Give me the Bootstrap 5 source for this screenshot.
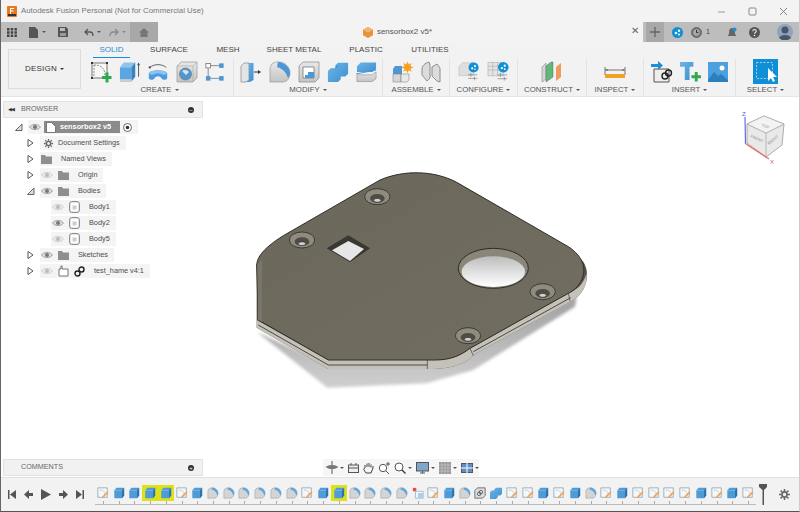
<!DOCTYPE html>
<html lang="en">
<head>
    <meta charset="UTF-8">
    <meta name="viewport" content="width=device-width, initial-scale=1.0">
    <title>Autodesk Fusion Personal</title>
    <link href="https://cdn.jsdelivr.net/npm/bootstrap@5.3.0/dist/css/bootstrap.min.css" rel="stylesheet">
    <style>
        html, body { margin: 0; width: 800px; height: 512px; overflow: hidden; background: #fff; }
        body { font-family: "Liberation Sans", Arial, sans-serif; font-size: 8px; color: #555; }
        svg { display: block; flex: none; }
        .app-window { width: 800px; height: 512px; border-left: 1px solid #666; border-bottom: 1px solid #555; border-right: 1px solid #ccc; }

        /* title bar */
        .title-bar { height: 22px; background: #f3f3f3; padding-left: 6px; font-size: 7.85px; color: #777; flex: none; }
        .win-ctrl { width: 31px; }

        /* tab strip */
        .tab-strip { height: 20px; background: #bdbdbd; flex: none; padding-left: 6px; }
        .caret-mini { width: 0; height: 0; border-left: 2px solid transparent; border-right: 2px solid transparent; border-top: 2.5px solid #555; margin-left: 3px; }
        .caret-mini.is-off { border-top-color: #888; }
        .home-btn { width: 28px; height: 20px; background: #a8a8a8; }
        .doc-tab { width: 485px; height: 20px; background: #f3f3f3; font-size: 8px; color: #555; position: relative; }
        .doc-close { position: absolute; right: 4px; top: 4px; font-size: 10px; line-height: 1; color: #666; }
        .plus-btn { width: 18px; height: 20px; background: #a8a8a8; margin: 0 4px 0 3px; }

        /* ribbon */
        .ribbon { height: 55px; background: #f2f2f2; border-bottom: 1px solid #e4e4e4; flex: none; padding-left: 7px; }
        .design-box { width: 73px; height: 40px; margin-top: 7px; background: #f1f1f1; border: 1px solid #dcdcdc; font-size: 8px; color: #333; letter-spacing: .2px; }
        .dropdown-toggle::after { margin-left: 3px; vertical-align: 1px; border-top-width: 2.5px; border-left-width: 2px; border-right-width: 2px; }
        .ribbon-side { padding-left: 5px; }
        .tab-row { height: 16px; padding-left: 7px; }
        .rib-tab { text-align: center; font-size: 8px; line-height: 15px; color: #444; }
        .rib-tab.is-active { color: #1b8dd6; border-bottom: 1.5px solid #1b8dd6; height: 16px; }
        .rib-group { height: 37px; border-right: 1px solid #e2e2e2; margin-top: 1px; }
        .rib-tools { height: 25px; gap: 7px; }
        .rib-label { font-size: 7.8px; line-height: 11px; color: #555; }

        /* canvas and floating panels */
        .work-area { position: relative; background: #fff; }
        .side-panel { position: absolute; left: 2px; width: 200px; height: 17px; background: #f1f1f1; border: 1px solid #e2e2e2; padding: 0 8px 0 4px; font-size: 7.2px; color: #666; }
        .browser-head { top: 4px; }
        .comments-head { bottom: 1px; padding-left: 17px; }
        .panel-dot { width: 6px; height: 6px; border-radius: 50%; background: #333; color: #fff; font-size: 6px; line-height: 6px; text-align: center; }
        .tree-list { position: absolute; top: 22px; left: 0; }
        .tree-row { height: 16px; }
        .tree-tri { width: 13px; }
        .lvl-0 { padding-left: 14px; }
        .lvl-1 { padding-left: 26px; }
        .lvl-2 { padding-left: 50px; }
        .tree-pill { height: 14px; background: #f4f4f4; padding: 0 6px 0 1px; gap: 5px; font-size: 7.3px; color: #4c4c4c; white-space: nowrap; }
        .tree-name { background: #8b8b8b; color: #fff; height: 12px; line-height: 12px; padding: 0 9px 0 2px; font-weight: 700; }
        .is-faded { opacity: .45; }
        .model-view { position: absolute; left: 239px; top: 68px; }
        .view-cube { position: absolute; left: 729px; top: 0; }
        .nav-bar { position: absolute; left: 322px; bottom: 1px; height: 17px; width: 156px; background: #f6f6f6; gap: 2px; padding: 0 3px; }
        .nav-gap { margin-left: 2px; }

        /* timeline */
        .time-line { height: 34px; background: #f2f2f2; border-top: 1px solid #e0e0e0; flex: none; padding-left: 7px; position: relative; }
        .play-btns { width: 87px; gap: 8px; }
        .time-track { border-bottom: 1px solid #bbb; height: 20px; margin-top: 7px; width: 661px; }
        .time-item { width: 15.93px; height: 16px; position: relative; }
        .time-item.is-hit { background: #dde11a; }
        .time-item svg { width: 12px; height: 12px; }
        .time-item::after { content: ""; position: absolute; left: 50%; top: 16px; width: 1px; height: 3px; background: #aaa; }
        .play-head { position: absolute; left: 758px; top: 6px; }
        .time-gear { position: absolute; right: 9px; top: 11px; }
    </style>
</head>
<body>
    <!-- shared icons -->
    <svg width="0" height="0" style="position:absolute">
        <defs>
            <linearGradient id="blueFace" x1="0" y1="0" x2="1" y2="1"><stop offset="0" stop-color="#6db5e8"/><stop offset="1" stop-color="#3d8fd0"/></linearGradient>
            <linearGradient id="grayFace" x1="0" y1="0" x2="0" y2="1"><stop offset="0" stop-color="#e8e8e8"/><stop offset="1" stop-color="#c4c4c4"/></linearGradient>
            <linearGradient id="plateFace" x1="0" y1="0" x2="1" y2="1"><stop offset="0" stop-color="#6c675b"/><stop offset="1" stop-color="#726d61"/></linearGradient>
            <linearGradient id="holeFill" x1="0" y1="0" x2="0" y2="1"><stop offset="0" stop-color="#bdbdbd"/><stop offset=".6" stop-color="#e6e6e6"/><stop offset="1" stop-color="#fff"/></linearGradient>
            <linearGradient id="shadowFade" x1="0" y1="0" x2="0" y2="1"><stop offset="0" stop-color="#a0a0a0"/><stop offset="1" stop-color="#cfcfcf"/></linearGradient>
            <filter id="softShadow" x="-10%" y="-20%" width="120%" height="140%"><feGaussianBlur stdDeviation="5"/></filter>
        </defs>
        <symbol id="i-sketch" viewBox="0 0 22 22"><path d="M2 2h15v15H2z" fill="#f7f7f7" stroke="#555" stroke-width=".8"/><path d="M4 4v11M4 4c8 0 11 4 11 11" fill="none" stroke="#777" stroke-width=".8" stroke-dasharray="2 1"/><path d="M1 1h2v2H1zM16 1h2v2h-2zM1 16h2v2H1z" fill="#333"/><path d="M12 15h3.500v-3.500h3v3.500h3v3h-3v3.500h-3v-3.500h-3.500z" fill="#2fa84f"/></symbol>
        <symbol id="i-extrude" viewBox="0 0 22 22"><path d="M1 6h12v15H1z" fill="#5aa6e2"/><path d="M1 6l4-5h12l-4 5z" fill="#8cc4ee"/><path d="M13 6l4-5v15l-4 5z" fill="#3a83bd"/><path d="M1 18.500h12V21H1z" fill="#cfcfcf"/><path d="M20.500 2v14" stroke="#444" stroke-width=".9"/><path d="M19 4l1.500-3L22 4z" fill="#444"/></symbol>
        <symbol id="i-revolve" viewBox="0 0 24 22"><path d="M2 12c3-4 17-4 20 0v6c-1 2-5 2-6 0-2-3-6-3-8 0-1 2-5 2-6 0z" fill="#4d9ade"/><path d="M2 12c3-4 17-4 20 0-2 3-5 2-7 1-2-1-4-1-6 0-2 1-5 2-7-1z" fill="#8cc4ee"/><path d="M3 6c5-4 13-4 18 0" fill="none" stroke="#444" stroke-width=".9"/><circle cx="3" cy="6" r="1.200" fill="#444"/></symbol>
        <symbol id="i-hole" viewBox="0 0 22 22"><path d="M1 5l4-4h16v16l-4 4H1z" fill="url(#grayFace)" stroke="#999" stroke-width=".7"/><path d="M1 5h16v16M17 5l4-4" fill="none" stroke="#aaa" stroke-width=".6"/><circle cx="9.500" cy="13" r="6" fill="#4d97d6" stroke="#777" stroke-width=".7"/><path d="M6 10a5 5 0 0 1 7 1l-3 3z" fill="#e2e2e2"/></symbol>
        <symbol id="i-box" viewBox="0 0 22 22"><path d="M6 4h10M3.500 7v9M6 18h10" fill="none" stroke="#666" stroke-width=".8"/><rect x="1" y="1.500" width="5" height="5" fill="#fff" stroke="#666" stroke-width=".8"/><rect x="15.500" y="1.500" width="5" height="5" fill="#4d97d6"/><rect x="1" y="15.500" width="5" height="5" fill="#4d97d6"/><rect x="15.500" y="15.500" width="5" height="5" fill="#4d97d6"/></symbol>
        <symbol id="i-press" viewBox="0 0 22 22"><path d="M1 5l3-3h5v17l-3 2H1z" fill="#e4e4e4" stroke="#888" stroke-width=".7"/><path d="M9 2h4.500v17L10 21H6l3-2z" fill="url(#blueFace)"/><path d="M14 11h5" stroke="#333"/><path d="M18 9l3 2-3 2z" fill="#333"/></symbol>
        <symbol id="i-fillet" viewBox="0 0 22 22"><path d="M1 21V8c0-4 3-7 7-7h2c6 0 11 5 11 11 0 5-3 9-7 9z" fill="url(#grayFace)" stroke="#999" stroke-width=".7"/><path d="M9 1c6 0 12 5 12 11 0 2-1 4-2 5-2-6-5-9-11-11z" fill="#4d97d6"/></symbol>
        <symbol id="i-shell" viewBox="0 0 22 22"><path d="M1 5l4-4h16v16l-4 4H1z" fill="url(#grayFace)" stroke="#888" stroke-width=".7"/><path d="M5 6h11v11H5z" fill="#fff" stroke="#666" stroke-width=".7"/><path d="M10 11h6v6H7v-3h3z" fill="#4d97d6"/></symbol>
        <symbol id="i-combine" viewBox="0 0 24 22"><path d="M9 4l3-3h11v12l-3 3h-5v3l-3 3H1V10l3-3h5z" fill="url(#blueFace)"/><path d="M9 7l3-3" stroke="#2f7cb9" fill="none"/></symbol>
        <symbol id="i-split" viewBox="0 0 22 22"><path d="M1 5l4-4h16v7l-4 3H1z" fill="url(#blueFace)"/><path d="M1 14h16l4-3v7l-4 3H1z" fill="url(#grayFace)" stroke="#888" stroke-width=".6"/><path d="M0 13l21-4" stroke="#4d97d6" fill="none"/></symbol>
        <symbol id="i-newcomp" viewBox="0 0 22 22"><path d="M1 8l2-3h7v8H1z" fill="#4d97d6"/><path d="M1 13h8v8H1z" fill="#d6d6d6" stroke="#777" stroke-width=".5"/><path d="M9 13h8v6l-2 2H9z" fill="#e8e8e8" stroke="#777" stroke-width=".5"/><path d="M15.500.5l1.300 3 3-1.400-1.400 3 3 1.300-3 1.300 1.400 3-3-1.400-1.300 3-1.300-3-3 1.400 1.400-3-3-1.300 3-1.300-1.400-3 3 1.400z" fill="#f4a11f"/></symbol>
        <symbol id="i-joint" viewBox="0 0 20 22"><path d="M1 8c0-3 3-6 7-7l1 3v13l-3 3-5-6zM11 6l5-3 3 4v14l-3-1-5-5z" fill="#dcdcdc" stroke="#777" stroke-width=".8"/></symbol>
        <symbol id="i-conf" viewBox="0 0 24 22"><path d="M1 5l4-4h12v14H1z" fill="#dedede" stroke="#bbb" stroke-width=".6"/><path d="M11 14h10M11 18h10M14 12v4M18 16v4" stroke="#888" stroke-width=".8"/><circle cx="17" cy="6" r="5.500" fill="#0f8fd6"/><circle cx="15.500" cy="7" r="1.200" fill="#fff"/><circle cx="18.500" cy="4.500" r="1.200" fill="#fff"/><circle cx="18.500" cy="8" r=".9" fill="#fff"/></symbol>
        <symbol id="i-table" viewBox="0 0 24 22"><path d="M1 1h16v14H1z" fill="#e5e5e5" stroke="#aaa" stroke-width=".6"/><path d="M1 5h16M1 9h16M6 1v14M11 1v14" stroke="#aaa" stroke-width=".6"/><path d="M11 14h10M11 18h10M14 12v4M18 16v4" stroke="#888" stroke-width=".8"/><circle cx="17" cy="6" r="5.500" fill="#0f8fd6"/><circle cx="15.500" cy="7" r="1.200" fill="#fff"/><circle cx="18.500" cy="4.500" r="1.200" fill="#fff"/><circle cx="18.500" cy="8" r=".9" fill="#fff"/></symbol>
        <symbol id="i-plane" viewBox="0 0 22 22"><path d="M1 6l4-4v16l-4 3z" fill="#d5d5d5" stroke="#888" stroke-width=".6"/><path d="M5 5l5-4h2v15l-7 5z" fill="#5fb877" stroke="#555" stroke-width=".4"/><path d="M15 6l5-4v14l-5 4z" fill="#ef9a5c"/></symbol>
        <symbol id="i-measure" viewBox="0 0 22 22"><path d="M1 6v8M21 6v8M1 9h20" stroke="#555" fill="none" stroke-width=".8"/><path d="M3 8v2M19 8v2" stroke="#555"/><rect x="1" y="13" width="20" height="4" fill="#eea324"/></symbol>
        <symbol id="i-derive" viewBox="0 0 22 22"><path d="M3 8h15v13H3z" fill="#eee" stroke="#555"/><path d="M0 3h7V0l5 4.500L7 9V6H0z" fill="#1c8fd6"/><circle cx="14" cy="15" r="3" fill="none" stroke="#222" stroke-width="1.400"/><circle cx="17.500" cy="12" r="3" fill="none" stroke="#222" stroke-width="1.400"/></symbol>
        <symbol id="i-bolt" viewBox="0 0 22 22"><path d="M0 1h14v5H10v14H5V6H0z" fill="url(#blueFace)"/><path d="M12 15h3.500v-3.500h3V15H22v3h-3.500v3.500h-3V18H12z" fill="#2fa84f"/></symbol>
        <symbol id="i-image" viewBox="0 0 20 20"><rect width="20" height="20" fill="#4d9fde"/><circle cx="14" cy="6" r="2.500" fill="#fff"/><path d="M0 18l6-8 4 4 3-2 7 6v2H0z" fill="#2c7fbe"/></symbol>
        <symbol id="i-tsketch" viewBox="0 0 14 14"><path d="M1 1h11v11H1z" fill="#f5f8fb" stroke="#8a9db0" stroke-width=".9"/><path d="M3.500 3.500c4 0 6 2 6 6" fill="none" stroke="#999" stroke-width=".8" stroke-dasharray="1.500 1"/><path d="M6 11l6-6 1.500 1.500-6 6H6z" fill="#eea659"/></symbol>
        <symbol id="i-tbox" viewBox="0 0 14 14"><path d="M1.500 4l2.500-3h9v9l-2.500 3h-9z" fill="#4f9bd8"/><path d="M10.500 4L13 1v9l-2.500 3z" fill="#2d73aa"/><path d="M1.500 4h9" stroke="#8cc2ea" stroke-width=".7"/></symbol>
        <symbol id="i-tfillet" viewBox="0 0 14 14"><path d="M1 13V5c0-2 2-4 4-4h2c3 0 6 3 6 6 0 3-2 6-4 6z" fill="#d4d4d4" stroke="#999" stroke-width=".6"/><path d="M6 1c4 0 7 3 7 7l-1 2C11 6 9 4 5 3z" fill="#5da5df"/></symbol>
        <symbol id="i-tcut" viewBox="0 0 14 14"><rect x="1" y="1" width="4" height="4" fill="#e0504b"/><path d="M4 5h9v8H4z" fill="#f5f8fb" stroke="#7fa9cc" stroke-width=".8"/><path d="M7 7h6v6H7z" fill="#a9d0ee"/></symbol>
        <symbol id="i-tlink" viewBox="0 0 14 14"><path d="M1 4l3-3h9v9l-3 3H1z" fill="#ddd" stroke="#555" stroke-width=".9"/><circle cx="6" cy="8" r="2" fill="none" stroke="#444" stroke-width=".9"/><circle cx="8" cy="6" r="2" fill="none" stroke="#444" stroke-width=".9"/></symbol>
        <symbol id="i-tcomb" viewBox="0 0 14 14"><path d="M5 3l2-2h7v7l-2 2H9v2l-2 2H0V6l2-2h3z" fill="url(#blueFace)"/></symbol>
        <symbol id="i-eye" viewBox="0 0 12 8"><path d="M.5 4C3 .5 9 .5 11.500 4 9 7.500 3 7.500 .5 4z" fill="#dcdcdc" stroke="#888" stroke-width=".7"/><circle cx="6" cy="4" r="2" fill="#777"/></symbol>
        <symbol id="i-folder" viewBox="0 0 11 9"><path d="M0 0h4l1 1.500h6V9H0z" fill="#8f8f8f"/></symbol>
        <symbol id="i-gear" viewBox="0 0 16 16"><circle cx="8" cy="8" r="3.700" fill="none" stroke="#666" stroke-width="2.500"/><path d="M8 0v3M8 13v3M0 8h3M13 8h3M2.300 2.300l2.100 2.100M11.600 11.600l2.100 2.100M2.300 13.700l2.100-2.100M11.600 4.400l2.100-2.100" stroke="#666" stroke-width="2.300"/></symbol>
        <symbol id="i-body" viewBox="0 0 11 12"><rect x=".7" y=".7" width="9.600" height="10.600" rx="2" fill="#fff" stroke="#777"/><rect x="3.500" y="4.500" width="4" height="4" fill="#ccc"/></symbol>
        <symbol id="i-link" viewBox="0 0 11 11"><circle cx="3.500" cy="7.500" r="2.500" fill="none" stroke="#222" stroke-width="1.400"/><circle cx="7.500" cy="3.500" r="2.500" fill="none" stroke="#222" stroke-width="1.400"/></symbol>
    </svg>

    <div class="app-window d-flex flex-column">
        <div class="title-bar d-flex align-items-center">
            <svg width="10" height="11" viewBox="0 0 10 11"><rect width="10" height="11" rx="1" fill="#e8791f"/><rect x="1" y="8" width="8" height="2" fill="#333"/><path d="M3 2h4v1H4v1.500h2.500v1H4V8H3z" fill="#fff"/></svg>
            <span class="ms-1">Autodesk Fusion Personal (Not for Commercial Use)</span>
            <div class="ms-auto d-flex text-center">
                <span class="win-ctrl d-flex justify-content-center"><svg width="9" height="9" viewBox="0 0 9 9"><path d="M1 5h7" stroke="#999"/></svg></span>
                <span class="win-ctrl d-flex justify-content-center"><svg width="9" height="9" viewBox="0 0 9 9"><rect x="1" y="1" width="7" height="7" rx="1" fill="none" stroke="#888"/></svg></span>
                <span class="win-ctrl d-flex justify-content-center"><svg width="9" height="9" viewBox="0 0 9 9"><path d="M1 1l7 7M8 1l-7 7" stroke="#888"/></svg></span>
            </div>
        </div>

        <div class="tab-strip d-flex align-items-center">
            <svg class="me-2" width="10" height="9" viewBox="0 0 10 9" fill="#444"><path d="M0 0h2.500v2.500H0zM3.700 0h2.500v2.500H3.700zM7.400 0h2.500v2.500H7.400zM0 3.300h2.500v2.500H0zM3.700 3.300h2.500v2.500H3.700zM7.400 3.300h2.500v2.500H7.400zM0 6.500h2.500V9H0zM3.700 6.500h2.500V9H3.700zM7.400 6.500h2.500V9H7.400z"/></svg>
            <span class="d-flex align-items-center me-2 ms-1"><svg width="9" height="11" viewBox="0 0 9 11"><path d="M0 0h6l3 3v8H0z" fill="#555"/></svg><i class="caret-mini ms-1"></i></span>
            <svg class="me-3 ms-1" width="10" height="10" viewBox="0 0 10 10"><path d="M0 0h8l2 2v8H0z" fill="#555"/><path d="M2 1h5v3H2z" fill="#bbb"/><path d="M2 6h6v3H2z" fill="#999"/></svg>
            <span class="d-flex align-items-center"><svg width="10" height="9" viewBox="0 0 10 9"><path d="M4 1L1 4l3 3M1 4h5c2 0 3 1.500 3 4" fill="none" stroke="#555" stroke-width="1.300"/></svg><i class="caret-mini"></i></span>
            <span class="d-flex align-items-center ms-2"><svg width="10" height="9" viewBox="0 0 10 9"><path d="M6 1l3 3-3 3M9 4H4C2 4 1 5.500 1 8" fill="none" stroke="#888" stroke-width="1.300"/></svg><i class="caret-mini is-off"></i></span>
            <div class="home-btn d-flex align-items-center justify-content-center ms-1"><svg width="10" height="9" viewBox="0 0 10 9"><path d="M5 0l5 4.500H8.500V9H1.500V4.500H0z" fill="#777"/></svg></div>
            <div class="doc-tab d-flex align-items-center justify-content-center">
                <span class="d-flex align-items-center gap-1" style="margin-left:-6px">
                    <svg width="10" height="11" viewBox="0 0 10 11"><path d="M5 0l5 2.700v5.600L5 11 0 8.300V2.700z" fill="#e8923a"/><path d="M5 0l5 2.700L5 5.500 0 2.700z" fill="#f2b374"/></svg>
                    sensorbox2 v5*
                </span>
                <span class="doc-close">&#10005;</span>
            </div>
            <div class="plus-btn d-flex align-items-center justify-content-center"><svg width="10" height="10" viewBox="0 0 10 10"><path d="M5 0v10M0 5h10" stroke="#666" stroke-width="1.400"/></svg></div>
            <svg class="ms-1" width="11" height="11" viewBox="0 0 11 11"><circle cx="5.500" cy="5.500" r="5.500" fill="#0f8fd6"/><circle cx="4" cy="6" r="1.300" fill="#fff"/><circle cx="7" cy="3.800" r="1.200" fill="#fff"/><circle cx="7" cy="7.500" r="1" fill="#fff"/></svg>
            <svg class="ms-2" width="11" height="11" viewBox="0 0 11 11"><circle cx="5.500" cy="5.500" r="5" fill="#777" stroke="#666"/><circle cx="5.500" cy="5.500" r="3.200" fill="#aaa"/><path d="M5.500 3v2.700h2" fill="none" stroke="#333"/></svg>
            <span class="ms-1" style="font-size:7px;color:#444">1</span>
            <svg style="margin-left:17px" width="10" height="11" viewBox="0 0 10 11"><path d="M5 1c2 0 3 2 3 4v2l1.500 2h-9L2 7V5c0-2 1-4 3-4z" fill="#666"/><circle cx="7.500" cy="2.500" r="2" fill="#1c8fd6"/></svg>
            <svg style="margin-left:12px" width="11" height="11" viewBox="0 0 11 11"><circle cx="5.500" cy="5.500" r="5.500" fill="#555"/><path d="M3.800 4.200c0-2.200 3.400-2.200 3.400 0 0 1.400-1.700 1.400-1.700 2.600" fill="none" stroke="#eee" stroke-width="1.100"/><circle cx="5.500" cy="8.500" r=".8" fill="#eee"/></svg>
            <svg style="margin-left:17px" width="16" height="16" viewBox="0 0 16 16"><circle cx="8" cy="8" r="8" fill="#8ea3bd"/><circle cx="8" cy="6" r="3.500" fill="#4a5666"/><path d="M2 14c1-4 11-4 12 0l-3 2H5z" fill="#4a5666"/></svg>
        </div>

        <div class="ribbon d-flex">
            <div class="design-box d-flex align-items-center justify-content-center flex-none">
                <span class="dropdown-toggle">DESIGN</span>
            </div>
            <div class="ribbon-side flex-grow-1">
                <div class="tab-row d-flex">
                    <div class="rib-tab is-active" style="width:37px">SOLID</div>
                    <div class="rib-tab" style="width:78px">SURFACE</div>
                    <div class="rib-tab" style="width:40px">MESH</div>
                    <div class="rib-tab" style="width:92px">SHEET METAL</div>
                    <div class="rib-tab" style="width:52px">PLASTIC</div>
                    <div class="rib-tab" style="width:76px">UTILITIES</div>
                </div>
                <div class="d-flex">
                    <div class="rib-group d-flex flex-column align-items-center" style="width:148px">
                        <div class="rib-tools d-flex align-items-center" style="margin-right:5px">
                            <svg width="22" height="22"><use href="#i-sketch"/></svg>
                            <svg width="21" height="22"><use href="#i-extrude"/></svg>
                            <svg width="22" height="22"><use href="#i-revolve"/></svg>
                            <svg width="22" height="22"><use href="#i-hole"/></svg>
                            <svg width="20" height="20"><use href="#i-box"/></svg>
                        </div>
                        <div class="rib-label dropdown-toggle">CREATE</div>
                    </div>
                    <div class="rib-group d-flex flex-column align-items-center" style="width:149px">
                        <div class="rib-tools d-flex align-items-center">
                            <svg width="22" height="22"><use href="#i-press"/></svg>
                            <svg width="22" height="22"><use href="#i-fillet"/></svg>
                            <svg width="22" height="22"><use href="#i-shell"/></svg>
                            <svg width="22" height="22"><use href="#i-combine"/></svg>
                            <svg width="21" height="22"><use href="#i-split"/></svg>
                        </div>
                        <div class="rib-label dropdown-toggle">MODIFY</div>
                    </div>
                    <div class="rib-group d-flex flex-column align-items-center" style="width:67px">
                        <div class="rib-tools d-flex align-items-center">
                            <svg width="22" height="22"><use href="#i-newcomp"/></svg>
                            <svg width="20" height="22"><use href="#i-joint"/></svg>
                        </div>
                        <div class="rib-label dropdown-toggle">ASSEMBLE</div>
                    </div>
                    <div class="rib-group d-flex flex-column align-items-center" style="width:68px">
                        <div class="rib-tools d-flex align-items-center">
                            <svg width="22" height="22"><use href="#i-conf"/></svg>
                            <svg width="23" height="22"><use href="#i-table"/></svg>
                        </div>
                        <div class="rib-label dropdown-toggle">CONFIGURE</div>
                    </div>
                    <div class="rib-group d-flex flex-column align-items-center" style="width:69px">
                        <div class="rib-tools d-flex align-items-center"><svg width="22" height="22"><use href="#i-plane"/></svg></div>
                        <div class="rib-label dropdown-toggle">CONSTRUCT</div>
                    </div>
                    <div class="rib-group d-flex flex-column align-items-center" style="width:57px">
                        <div class="rib-tools d-flex align-items-center"><svg width="22" height="22"><use href="#i-measure"/></svg></div>
                        <div class="rib-label dropdown-toggle">INSPECT</div>
                    </div>
                    <div class="rib-group d-flex flex-column align-items-center" style="width:92px">
                        <div class="rib-tools d-flex align-items-center">
                            <svg width="22" height="22"><use href="#i-derive"/></svg>
                            <svg width="21" height="21"><use href="#i-bolt"/></svg>
                            <svg width="20" height="20"><use href="#i-image"/></svg>
                        </div>
                        <div class="rib-label dropdown-toggle">INSERT</div>
                    </div>
                    <div class="rib-group d-flex flex-column align-items-center border-0" style="width:59px">
                        <div class="rib-tools d-flex align-items-center">
                            <svg width="25" height="25" viewBox="0 0 25 25"><rect width="25" height="25" fill="#0f8fd6"/><rect x="3.500" y="3.500" width="16" height="16" fill="none" stroke="#bfe2f7" stroke-width=".8" stroke-dasharray="2 1.500"/><path d="M15 9l0 13 3-3 2 4 2-1-2-4h4z" fill="#fff"/></svg>
                        </div>
                        <div class="rib-label dropdown-toggle">SELECT</div>
                    </div>
                </div>
            </div>
        </div>

        <div class="work-area flex-grow-1">
            <!-- plate model -->
            <svg class="model-view" width="360" height="225" viewBox="0 0 1080 675">
                <path d="M50 500L262 668 560 655 700 615 1005 425 1010 395 700 560 560 600 265 600z" fill="url(#shadowFade)" filter="url(#softShadow)"/>
                <path d="M50 300V488L265 612H565C640 612 680 595 700 570L1000 405C1045 375 1050 320 1030 290L985 245 50 300z" fill="#57534a"/>
                <path d="M50 465V488L265 612H565C640 612 680 595 700 570L1000 405C1030 385 1042 355 1040 325 1030 360 1010 375 985 385L690 550C640 590 600 585 560 585H265z" fill="#c4c1b9"/>
                <path d="M265 600H562M55 480L265 600M700 560L992 398" stroke="#4d4a42" stroke-width="3" fill="none"/>
                <path d="M562 585V612M690 550L700 572M985 385L990 408" stroke="#3d3a33" stroke-width="2" fill="none"/>
                <path d="M50 300C52 275 70 250 130 212L420 45C490 15 580 15 650 52L985 245C1030 275 1040 310 1025 345 1015 365 1000 378 985 385L690 550C640 588 600 585 560 585H265L55 465z" fill="url(#plateFace)" stroke="#2e2c27" stroke-width="3"/>
                <path d="M52 298L66 285V470L54 464z" fill="#7a7569"/>
                <path d="M262 250L325 212 388 250 330 290z" fill="#3a3832" stroke="#222" stroke-width="1.500"/>
                <path d="M276 256L325 228 372 252 330 288z" fill="#e6e6e6"/>
                <ellipse cx="760" cy="310" rx="105" ry="60" fill="#8a8679" stroke="#2e2c27" stroke-width="3"/>
                <ellipse cx="760" cy="320" rx="95" ry="46" fill="url(#holeFill)"/>
                <g id="csk1" fill="none">
                    <ellipse cx="412" cy="95" rx="38" ry="24" fill="#8f8b80" stroke="#2e2c27" stroke-width="2.500"/>
                    <ellipse cx="412" cy="100" rx="22" ry="13" fill="#4f4c44"/>
                    <ellipse cx="412" cy="106" rx="11" ry="6" fill="#d0d0d0" stroke="#222" stroke-width="2"/>
                </g>
                <use href="#csk1" x="-226" y="130"/>
                <use href="#csk1" x="496" y="285"/>
                <use href="#csk1" x="272" y="417"/>
            </svg>

            <!-- view cube -->
            <svg class="view-cube" width="70" height="78" viewBox="0 2 70 78">
                <path d="M34 21L54 29 52 50 36 62 17 48 17 29z" fill="#e9e9e9" stroke="#999" stroke-width=".8"/>
                <path d="M17 29L36 38 54 29M36 38V62" fill="none" stroke="#aaa" stroke-width=".8"/>
                <path d="M17 29L34 21 54 29 36 38z" fill="#f3f3f3" stroke="#aaa" stroke-width=".7"/>
                <path d="M15.500 49L15 22" stroke="#6a6ae0" stroke-width="1.200"/>
                <path d="M16 49L39 64" stroke="#e06a6a" stroke-width="1.200"/>
                <text x="12" y="21" font-size="6" fill="#5a5ae0">Z</text>
                <text x="40" y="69" font-size="6" fill="#e05a5a">X</text>
                <text x="31" y="31" font-size="4" fill="#999" transform="rotate(20 31 31)">TOP</text>
                <text x="20" y="42" font-size="4" fill="#888" transform="rotate(25 20 42)">FRONT</text>
                <text x="39" y="50" font-size="4" fill="#888" transform="rotate(-40 39 50)">RIGHT</text>
            </svg>

            <div class="side-panel browser-head d-flex align-items-center">
                <span style="font-size:5px;color:#333;letter-spacing:-1px">&#9664;&#9664;</span>
                <span style="margin-left:7px">BROWSER</span>
                <span class="panel-dot ms-auto">&#8722;</span>
            </div>

            <ul class="tree-list list-unstyled m-0">
                <li class="tree-row lvl-0 d-flex align-items-center">
                    <span class="tree-tri"><svg width="8" height="8" viewBox="0 0 8 8"><path d="M7 1v6.500H.5z" fill="#ddd" stroke="#444" stroke-width=".8"/></svg></span>
                    <span class="tree-pill d-inline-flex align-items-center" style="gap:3px">
                        <svg width="12" height="8"><use href="#i-eye"/></svg>
                        <span class="d-inline-flex align-items-center tree-name"><svg class="me-1" width="10" height="11" viewBox="0 0 10 11"><path d="M.5.5h5l4 4v6h-9z" fill="#fff" stroke="#777"/></svg>sensorbox2 v5</span>
                        <svg width="9" height="9" viewBox="0 0 9 9"><circle cx="4.500" cy="4.500" r="4" fill="#fff" stroke="#444" stroke-width=".8"/><circle cx="4.500" cy="4.500" r="1.800" fill="#333"/></svg>
                    </span>
                </li>
                <li class="tree-row lvl-1 d-flex align-items-center">
                    <span class="tree-tri"><svg width="7" height="8" viewBox="0 0 7 8"><path d="M1 .5L6 4 1 7.500z" fill="#fff" stroke="#444" stroke-width=".9"/></svg></span>
                    <span class="tree-pill d-inline-flex align-items-center" style="padding-left:4px">
                        <svg width="9" height="9"><use href="#i-gear"/></svg>
                        <span>Document Settings</span>
                    </span>
                </li>
                <li class="tree-row lvl-1 d-flex align-items-center">
                    <span class="tree-tri"><svg width="7" height="8" viewBox="0 0 7 8"><path d="M1 .5L6 4 1 7.500z" fill="#fff" stroke="#444" stroke-width=".9"/></svg></span>
                    <span class="tree-pill d-inline-flex align-items-center">
                        <svg width="11" height="9"><use href="#i-folder"/></svg>
                        <span class="ms-1">Named Views</span>
                    </span>
                </li>
                <li class="tree-row lvl-1 d-flex align-items-center">
                    <span class="tree-tri"><svg width="7" height="8" viewBox="0 0 7 8"><path d="M1 .5L6 4 1 7.500z" fill="#fff" stroke="#444" stroke-width=".9"/></svg></span>
                    <span class="tree-pill d-inline-flex align-items-center">
                        <svg class="is-faded" width="12" height="8"><use href="#i-eye"/></svg>
                        <svg width="11" height="9"><use href="#i-folder"/></svg>
                        <span class="ms-1">Origin</span>
                    </span>
                </li>
                <li class="tree-row lvl-1 d-flex align-items-center">
                    <span class="tree-tri"><svg width="8" height="8" viewBox="0 0 8 8"><path d="M7 1v6.500H.5z" fill="#ddd" stroke="#444" stroke-width=".8"/></svg></span>
                    <span class="tree-pill d-inline-flex align-items-center">
                        <svg width="12" height="8"><use href="#i-eye"/></svg>
                        <svg width="11" height="9"><use href="#i-folder"/></svg>
                        <span class="ms-1">Bodies</span>
                    </span>
                </li>
                <li class="tree-row lvl-2 d-flex align-items-center">
                    <span class="tree-pill d-inline-flex align-items-center">
                        <svg class="is-faded" width="12" height="8"><use href="#i-eye"/></svg>
                        <svg width="11" height="12"><use href="#i-body"/></svg>
                        <span class="ms-1">Body1</span>
                    </span>
                </li>
                <li class="tree-row lvl-2 d-flex align-items-center">
                    <span class="tree-pill d-inline-flex align-items-center">
                        <svg width="12" height="8"><use href="#i-eye"/></svg>
                        <svg width="11" height="12"><use href="#i-body"/></svg>
                        <span class="ms-1">Body2</span>
                    </span>
                </li>
                <li class="tree-row lvl-2 d-flex align-items-center">
                    <span class="tree-pill d-inline-flex align-items-center">
                        <svg class="is-faded" width="12" height="8"><use href="#i-eye"/></svg>
                        <svg width="11" height="12"><use href="#i-body"/></svg>
                        <span class="ms-1">Body5</span>
                    </span>
                </li>
                <li class="tree-row lvl-1 d-flex align-items-center">
                    <span class="tree-tri"><svg width="7" height="8" viewBox="0 0 7 8"><path d="M1 .5L6 4 1 7.500z" fill="#fff" stroke="#444" stroke-width=".9"/></svg></span>
                    <span class="tree-pill d-inline-flex align-items-center">
                        <svg width="12" height="8"><use href="#i-eye"/></svg>
                        <svg width="11" height="9"><use href="#i-folder"/></svg>
                        <span class="ms-1">Sketches</span>
                    </span>
                </li>
                <li class="tree-row lvl-1 d-flex align-items-center">
                    <span class="tree-tri"><svg width="7" height="8" viewBox="0 0 7 8"><path d="M1 .5L6 4 1 7.500z" fill="#fff" stroke="#444" stroke-width=".9"/></svg></span>
                    <span class="tree-pill d-inline-flex align-items-center">
                        <svg class="is-faded" width="12" height="8"><use href="#i-eye"/></svg>
                        <svg width="11" height="12" viewBox="0 0 11 12"><path d="M1 4h2V1h1v3h6v7H1z" fill="#fff" stroke="#666" stroke-width=".9"/></svg>
                        <svg width="11" height="11"><use href="#i-link"/></svg>
                        <span class="ms-1">test_hame v4:1</span>
                    </span>
                </li>
            </ul>

            <div class="side-panel comments-head d-flex align-items-center">
                <span>COMMENTS</span>
                <span class="panel-dot ms-auto">+</span>
            </div>

            <div class="nav-bar d-flex align-items-center">
                <svg width="12" height="13" viewBox="0 0 12 13"><path d="M6 0v13M0 6h12" stroke="#555"/><ellipse cx="6" cy="6" rx="5" ry="2" fill="#777"/></svg><i class="caret-mini m-0"></i>
                <svg class="nav-gap" width="11" height="11" viewBox="0 0 11 11"><rect x=".5" y="3" width="10" height="7.500" fill="#eee" stroke="#555"/><path d="M3 1v2M8 1v2M1 6h9" stroke="#555"/></svg>
                <svg class="nav-gap" width="11" height="12" viewBox="0 0 11 12"><path d="M2 6V3M4 5V1.500M6 5V1M8 5.500V2.500M2 6c-1 0-1.500 1-1 2l2 3h5l2-5V4" fill="none" stroke="#444"/></svg>
                <svg class="nav-gap" width="12" height="12" viewBox="0 0 12 12"><circle cx="5" cy="6" r="3.700" fill="#fff" stroke="#555"/><path d="M8 9l3 3M10 0v4M8 2h4" stroke="#555"/></svg>
                <svg class="nav-gap" width="12" height="12" viewBox="0 0 12 12"><circle cx="5" cy="5" r="4" fill="#fff" stroke="#555"/><path d="M8 8l3.500 3.500" stroke="#333" stroke-width="1.300"/></svg><i class="caret-mini m-0"></i>
                <svg class="nav-gap" width="13" height="12" viewBox="0 0 13 12"><rect x=".5" y=".5" width="12" height="8.500" fill="#7fa6cc" stroke="#555"/><path d="M4 11h5M6.500 9v2" stroke="#555"/></svg><i class="caret-mini m-0"></i>
                <svg class="nav-gap" width="12" height="12" viewBox="0 0 12 12"><rect width="12" height="12" fill="#999"/><path d="M3 0v12M6 0v12M9 0v12M0 3h12M0 6h12M0 9h12" stroke="#ccc" stroke-width=".6"/></svg><i class="caret-mini m-0"></i>
                <svg class="nav-gap" width="12" height="10" viewBox="0 0 12 10"><rect x=".5" y=".5" width="11" height="9" fill="#5f8fc4" stroke="#556"/><path d="M6 0v10M0 5h12" stroke="#fff"/></svg><i class="caret-mini m-0"></i>
            </div>
        </div>

        <div class="time-line d-flex">
            <div class="play-btns d-flex align-items-center">
                <svg width="8" height="9" viewBox="0 0 8 9"><path d="M0 0h1.500v9H0zM8 0v9L2 4.500z" fill="#555"/></svg>
                <svg width="9" height="9" viewBox="0 0 9 9"><path d="M5 0v9L0 4.500zM5 3h4v3H5z" fill="#555"/></svg>
                <svg width="10" height="11" viewBox="0 0 10 11"><path d="M0 0l10 5.500L0 11z" fill="#555"/></svg>
                <svg width="9" height="9" viewBox="0 0 9 9"><path d="M4 0v9l5-4.500zM0 3h4v3H0z" fill="#555"/></svg>
                <svg width="8" height="9" viewBox="0 0 8 9"><path d="M6.500 0H8v9H6.500zM0 0v9l6-4.500z" fill="#555"/></svg>
            </div>
            <div class="time-track d-flex" id="track"></div>
            <svg class="play-head" width="9" height="21" viewBox="0 0 9 21"><path d="M0 0h8v3L5 6v15H3.500V6L0 3z" fill="#555"/></svg>
            <svg class="time-gear" width="11" height="11"><use href="#i-gear"/></svg>
        </div>
    </div>

    <script src="https://cdn.jsdelivr.net/npm/bootstrap@5.3.0/dist/js/bootstrap.bundle.min.js"></script>
    <script>
        // timeline features, left to right; * = highlighted
        const features = 's b b b* b* s b f f f f f f s b b* f f f f c s b f l k s s b s b f s b s s s s b s b s'.split(' ');
        const names = { s: 'i-tsketch', b: 'i-tbox', f: 'i-tfillet', c: 'i-tcut', l: 'i-tlink', k: 'i-tcomb' };
        document.getElementById('track').innerHTML = features.map(f => `
            <div class="time-item d-flex align-items-center justify-content-center${f.endsWith('*') ? ' is-hit' : ''}">
                <svg><use href="#${names[f[0]]}"/></svg>
            </div>`).join('');
    </script>
</body>
</html>
